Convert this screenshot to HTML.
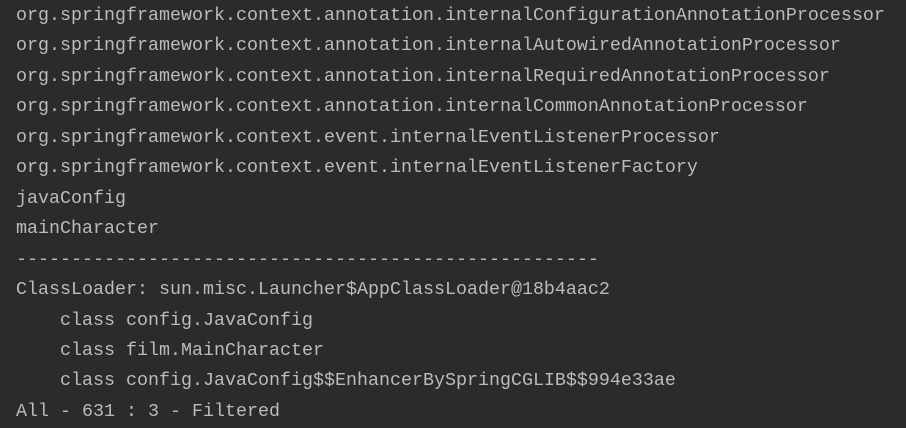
<!DOCTYPE html>
<html><head><style>
html,body{margin:0;padding:0;background:#2b2b2b;width:906px;height:428px;overflow:hidden}
pre{margin:0;position:absolute;left:16px;top:1px;font-family:"Liberation Mono",monospace;font-size:18.33px;line-height:30.45px;color:#bbbbbb}
</style></head><body><pre>org.springframework.context.annotation.internalConfigurationAnnotationProcessor
org.springframework.context.annotation.internalAutowiredAnnotationProcessor
org.springframework.context.annotation.internalRequiredAnnotationProcessor
org.springframework.context.annotation.internalCommonAnnotationProcessor
org.springframework.context.event.internalEventListenerProcessor
org.springframework.context.event.internalEventListenerFactory
javaConfig
mainCharacter
-----------------------------------------------------
ClassLoader: sun.misc.Launcher$AppClassLoader@18b4aac2
    class config.JavaConfig
    class film.MainCharacter
    class config.JavaConfig$$EnhancerBySpringCGLIB$$994e33ae
All - 631 : 3 - Filtered</pre></body></html>
